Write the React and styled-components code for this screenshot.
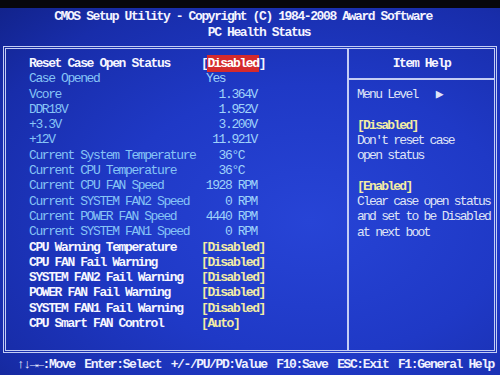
import styled, { createGlobalStyle } from "styled-components";

const GlobalStyle = createGlobalStyle`
  html, body {
    margin: 0;
    padding: 0;
    background: #07070c;
  }
  body {
    width: 500px;
    height: 375px;
    overflow: hidden;
  }
`;

// rows of the PC Health Status page
const rows = [
  { label: "Reset Case Open Status", value: "Disabled", kind: "selected" },
  { label: "Case Opened", value: "Yes", kind: "info", align: "left" },
  { label: "Vcore", value: "1.364V", kind: "info" },
  { label: "DDR18V", value: "1.952V", kind: "info" },
  { label: "+3.3V", value: "3.200V", kind: "info" },
  { label: "+12V", value: "11.921V", kind: "info" },
  { label: "Current System Temperature", value: "36°C  ", kind: "info" },
  { label: "Current CPU Temperature", value: "36°C  ", kind: "info" },
  { label: "Current CPU FAN Speed", value: "1928 RPM", kind: "info" },
  { label: "Current SYSTEM FAN2 Speed", value: "0 RPM", kind: "info" },
  { label: "Current POWER FAN Speed", value: "4440 RPM", kind: "info" },
  { label: "Current SYSTEM FAN1 Speed", value: "0 RPM", kind: "info" },
  { label: "CPU Warning Temperature", value: "[Disabled]", kind: "option" },
  { label: "CPU FAN Fail Warning", value: "[Disabled]", kind: "option" },
  { label: "SYSTEM FAN2 Fail Warning", value: "[Disabled]", kind: "option" },
  { label: "POWER FAN Fail Warning", value: "[Disabled]", kind: "option" },
  { label: "SYSTEM FAN1 Fail Warning", value: "[Disabled]", kind: "option" },
  { label: "CPU Smart FAN Control", value: "[Auto]", kind: "option" },
];

const helpLines = [
  { text: "Menu Level   ▶", tone: "text" },
  { text: "", tone: "text" },
  { text: "[Disabled]", tone: "key" },
  { text: "Don't reset case", tone: "text" },
  { text: "open status", tone: "text" },
  { text: "", tone: "text" },
  { text: "[Enabled]", tone: "key" },
  { text: "Clear case open status", tone: "text" },
  { text: "and set to be Disabled", tone: "text" },
  { text: "at next boot", tone: "text" },
];

const footerKeys = [
  "↑↓→←:Move",
  "Enter:Select",
  "+/-/PU/PD:Value",
  "F10:Save",
  "ESC:Exit",
  "F1:General Help",
];

const Screen = styled.div`
  margin-top: 8px;
  width: 500px;
  height: 367px;
  display: flex;
  flex-direction: column;
  background: radial-gradient(
    ellipse at 62% 58%,
    #2744d6 0%,
    #1f39c6 45%,
    #182daa 80%,
    #12238c 100%
  );
  font-family: "Liberation Mono", "DejaVu Sans Mono", monospace;
  font-size: 13px;
  letter-spacing: -1.4px;
  color: #f2f2ff;
  white-space: pre;
`;

const Header = styled.div`
  height: 37px;
  padding-top: 1px;
  display: flex;
  flex-direction: column;
  align-items: center;
`;

const TitleLine = styled.div`
  line-height: 16px;
  font-weight: bold;
  color: #f4f4ff;
  margin-left: ${(p) => p.$shift || 0}px;
`;

const Frame = styled.div`
  margin: 0 3px 0 3px;
  height: 307px;
  box-sizing: border-box;
  border: 3px double #c4cdf4;
  display: grid;
  grid-template-columns: 343px 1fr;
`;

const MainPanel = styled.div`
  border-right: 2px solid #c4cdf4;
  padding: 7px 0 0 23px;
`;

const Row = styled.div`
  display: flex;
  height: 15.3px;
  line-height: 15.3px;
`;

const Label = styled.span`
  width: 172px;
  font-weight: ${(p) => (p.$kind === "info" ? "normal" : "bold")};
  color: ${(p) => (p.$kind === "info" ? "#86c4f6" : "#f6f6ff")};
`;

const Value = styled.span`
  width: 56px;
  text-align: ${(p) => (p.$align === "right" ? "right" : "left")};
  padding-left: ${(p) => p.$inset || 0}px;
  font-weight: ${(p) => (p.$kind === "info" ? "normal" : "bold")};
  color: ${(p) => (p.$kind === "info" ? "#9fd2fa" : "#f3eca4")};
`;

const SelectedValue = styled.span`
  font-weight: bold;
  color: #f6f6ff;
`;

const Highlight = styled.span`
  background: #d52a2c;
  color: #ffffff;
  padding: 1px 0;
`;

const HelpPanel = styled.div`
  display: flex;
  flex-direction: column;
  letter-spacing: -1.75px;
`;

const HelpHeader = styled.div`
  height: 29px;
  border-bottom: 2px solid #c4cdf4;
  display: flex;
  align-items: center;
  justify-content: center;
  font-weight: bold;
  letter-spacing: -1.4px;
  color: #f6f6ff;
`;

const HelpBody = styled.div`
  padding: 7px 0 0 8px;
`;

const HelpLine = styled.div`
  height: 15.3px;
  line-height: 15.3px;
  font-weight: ${(p) => (p.$tone === "key" ? "bold" : "normal")};
  color: ${(p) => (p.$tone === "key" ? "#f3eca4" : "#dfe3f6")};
`;

const Footer = styled.div`
  flex: 1;
  display: flex;
  align-items: center;
  justify-content: space-between;
  padding: 0 6px 0 17px;
  font-weight: bold;
  color: #eef0ff;
`;

function ValueCell({ row }) {
  if (row.kind === "selected") {
    return (
      <Value $kind="option">
        <SelectedValue>
          [<Highlight>{row.value}</Highlight>]
        </SelectedValue>
      </Value>
    );
  }
  if (row.kind === "option") {
    return <Value $kind="option">{row.value}</Value>;
  }
  const align = row.align === "left" ? "left" : "right";
  return (
    <Value $kind={row.kind} $align={align} $inset={align === "left" ? 5 : 0}>
      {row.value}
    </Value>
  );
}

export default function App() {
  return (
    <>
      <GlobalStyle />
      <Screen>
        <Header>
          <TitleLine $shift={-14}>
            CMOS Setup Utility - Copyright (C) 1984-2008 Award Software
          </TitleLine>
          <TitleLine $shift={18}>PC Health Status</TitleLine>
        </Header>
        <Frame>
          <MainPanel>
            {rows.map((row) => (
              <Row key={row.label}>
                <Label $kind={row.kind}>{row.label}</Label>
                <ValueCell row={row} />
              </Row>
            ))}
          </MainPanel>
          <HelpPanel>
            <HelpHeader>Item Help</HelpHeader>
            <HelpBody>
              {helpLines.map((line, i) => (
                <HelpLine key={i} $tone={line.tone}>
                  {line.text}
                </HelpLine>
              ))}
            </HelpBody>
          </HelpPanel>
        </Frame>
        <Footer>
          {footerKeys.map((k) => (
            <span key={k}>{k}</span>
          ))}
        </Footer>
      </Screen>
    </>
  );
}
